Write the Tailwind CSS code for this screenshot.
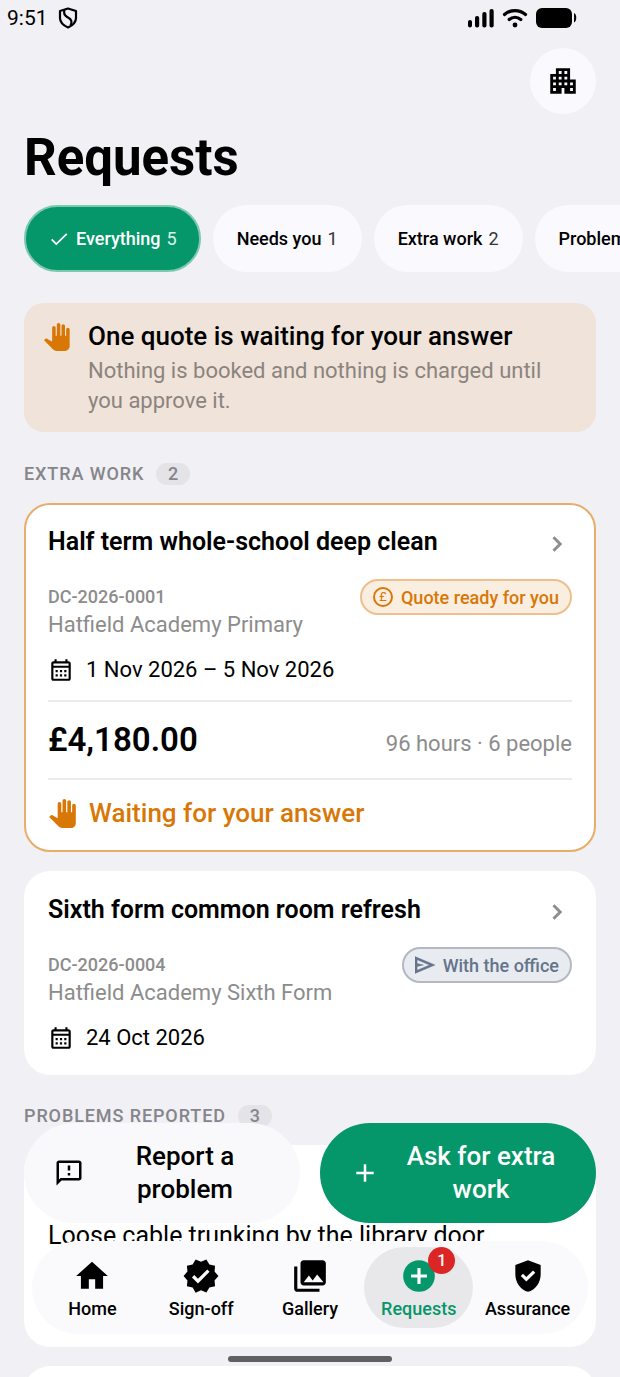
<!DOCTYPE html>
<html lang="en">
<head>
  <meta charset="UTF-8">
  <meta name="viewport" content="width=device-width, initial-scale=1">
  <title>Requests</title>
  <script src="https://cdn.jsdelivr.net/npm/@tailwindcss/browser@4"></script>
</head>
<body class="h-dvh overflow-hidden bg-[#f0f0f5] text-black font-['Roboto',sans-serif]">

  <div class="relative h-full flex flex-col">

    <!-- Status bar -->
    <div class="flex items-center h-9 pl-[7px] pr-[43px] shrink-0">
      <span class="text-[21px] leading-9">9:51</span>
      <svg class="ml-[10px] w-[20px] h-[22px]" viewBox="0 0 20 22" fill="none" stroke="currentColor" stroke-width="2.2" stroke-linejoin="round">
        <path d="M10 1.5 2 4v7c0 4.5 3.5 7.500 8 9.500 4.500-2 8-5 8-9.500V4z"></path>
        <path d="M6.500 2.800c-1.500 4 .5 6 3.500 7.700 3.500 1.900 4.500 4.500 2.500 8"></path>
      </svg>
      <svg class="ml-auto w-[26px] h-5" viewBox="0 0 26 20" fill="currentColor">
        <rect x="0" y="12" width="4" height="7.500" rx="2"></rect>
        <rect x="7" y="8" width="4.200" height="11.500" rx="2"></rect>
        <rect x="14.300" y="4" width="4.200" height="15.500" rx="2"></rect>
        <rect x="21.500" y="1" width="4.200" height="18.500" rx="2"></rect>
      </svg>
      <svg class="ml-2 w-[26px] h-5" viewBox="0 0 26 20" fill="none" stroke="currentColor" stroke-width="3.200" stroke-linecap="round">
        <path d="M2.500 6.500c6-5.300 15-5.300 21 0"></path>
        <path d="M7.200 11.500c3.400-2.900 8.200-2.900 11.600 0"></path>
        <circle cx="13" cy="17" r="2.400" fill="currentColor" stroke="none"></circle>
      </svg>
      <svg class="ml-2 w-[41px] h-5" viewBox="0 0 41 20" fill="currentColor">
        <rect x="0" y="0" width="36" height="20" rx="6"></rect>
        <path d="M38 5c3 1 3 8.500 0 9.500z"></path>
      </svg>
    </div>

    <main class="flex-1 min-h-0 overflow-y-auto [scrollbar-width:none]">
      <!-- Header -->
      <header class="px-6 pt-3">
        <div class="flex justify-end">
          <button type="button" aria-label="Switch site" class="size-[66px] rounded-full bg-[#f9f9fe] flex items-center justify-center">
            <svg class="size-[34px]" viewBox="0 0 24 24" fill="currentColor"><path d="M17 11V3H7v4H3v14h8v-4h2v4h8V11h-4zM7 19H5v-2h2v2zm0-4H5v-2h2v2zm0-4H5V9h2v2zm4 4H9v-2h2v2zm0-4H9V9h2v2zm0-4H9V5h2v2zm4 8h-2v-2h2v2zm0-4h-2V9h2v2zm0-4h-2V5h2v2zm4 12h-2v-2h2v2zm0-4h-2v-2h2v2z"></path></svg>
          </button>
        </div>
        <h1 class="mt-[13px] text-[51px] leading-[62px] font-bold">Requests</h1>
      </header>

      <!-- Filter chips -->
      <div class="mt-4 pl-6 flex gap-3 overflow-hidden text-[18px] leading-6 font-medium whitespace-nowrap">
        <button type="button" aria-pressed="true" class="h-[67px] shrink-0 px-[22px] rounded-full border-2 border-[#7cc9ae] bg-[#059669] text-white flex items-center gap-[6px]">
          <svg class="size-[22px]" viewBox="0 0 24 24" fill="none" stroke="currentColor" stroke-width="2"><path d="M4 12.500 9 17.500 20.500 6.500"></path></svg>
          <span>Everything</span>
          <span class="font-normal text-white/85">5</span>
        </button>
        <button type="button" class="h-[67px] shrink-0 px-6 rounded-full bg-[#f9f9fe] flex items-center gap-[6px]">
          Needs you <span class="font-normal text-[#333]">1</span>
        </button>
        <button type="button" class="h-[67px] shrink-0 px-6 rounded-full bg-[#f9f9fe] flex items-center gap-[6px]">
          Extra work <span class="font-normal text-[#333]">2</span>
        </button>
        <button type="button" class="h-[67px] shrink-0 px-6 rounded-full bg-[#f9f9fe] flex items-center gap-[6px]">
          Problems <span class="font-normal text-[#333]">3</span>
        </button>
      </div>

      <!-- Banner -->
      <div class="mx-6 mt-[31px] px-5 py-4 rounded-[20px] bg-[#f0e3d9] flex items-start gap-4">
        <svg class="mt-1 size-7 shrink-0 text-[#d97706]" viewBox="1 0 24 24" fill="currentColor"><path d="M23 5.500V20c0 2.200-1.800 4-4 4h-7.300c-1.080 0-2.100-.43-2.850-1.190L1 14.830s1.260-1.230 1.300-1.250c.22-.19.49-.29.79-.29.22 0 .42.06.6.16.04.010 4.310 2.460 4.310 2.460V4c0-.83.67-1.500 1.500-1.500S11 3.170 11 4v7h1V1.500c0-.83.67-1.500 1.500-1.500S15 .67 15 1.500V11h1V2.500c0-.83.67-1.500 1.500-1.500s1.500.67 1.500 1.500V11h1V5.500c0-.83.67-1.500 1.500-1.500s1.500.67 1.500 1.500z"></path></svg>
        <div>
          <h2 class="text-[26px] leading-[34px] font-medium">One quote is waiting for your answer</h2>
          <p class="mt-[3px] text-[22px] leading-[30px] text-[#8b837e]">Nothing is booked and nothing is charged until you approve it.</p>
        </div>
      </div>

      <!-- Extra work -->
      <section class="px-6 mt-[31px]">
        <div class="flex items-center gap-3 mb-[18px] text-[18px] leading-[22px] text-[#85858a] font-medium">
          <h2 class="tracking-wider">EXTRA WORK</h2>
          <span class="w-[34px] text-center rounded-full bg-[#e3e3e8]">2</span>
        </div>

        <div class="flex flex-col gap-[19px]">
          <a href="#" class="block p-[22px] rounded-[26px] border-2 border-[#e8ad69] bg-white">
            <div class="flex items-start justify-between h-[34px]">
              <h3 class="text-[25px] leading-[30px] font-semibold">Half term whole-school deep clean</h3>
              <svg class="mt-[2px] size-[30px] text-[#8c8c8c]" viewBox="0 0 24 24" fill="currentColor" stroke="currentColor" stroke-width=".4"><path d="M8.590 16.590L13.170 12 8.590 7.410 10 6l6 6-6 6z"></path></svg>
            </div>
            <div class="mt-[18px] flex items-start justify-between">
              <div class="pt-[5px] text-[#8c8c8c]">
                <p class="text-[18px] leading-[26px] font-medium">DC-2026-0001</p>
                <p class="text-[22px] leading-[30px]">Hatfield Academy Primary</p>
              </div>
              <span class="h-9 px-[11px] rounded-full border-2 border-[#eebf8c] bg-[#faeee1] text-[#d97706] text-[18px] font-medium flex items-center gap-2">
                <span class="size-5 rounded-full border-2 border-current text-[13px] font-normal leading-4 text-center">£</span>
                Quote ready for you
              </span>
            </div>
            <div class="mt-[15px] flex items-center gap-3 text-[22px] leading-[30px]">
              <svg class="size-[26px]" viewBox="0 0 24 24" fill="currentColor"><path d="M19 4h-1V2h-2v2H8V2H6v2H5c-1.110 0-1.990.9-1.990 2L3 20c0 1.100.89 2 2 2h14c1.100 0 2-.9 2-2V6c0-1.100-.9-2-2-2zm0 16H5V10h14v10zm0-12H5V6h14v2zM9 14H7v-2h2v2zm4 0h-2v-2h2v2zm4 0h-2v-2h2v2zm-8 4H7v-2h2v2zm4 0h-2v-2h2v2zm4 0h-2v-2h2v2z"></path></svg>
              1 Nov 2026 – 5 Nov 2026
            </div>
            <div class="mt-[15px] py-[18px] border-y-2 border-[#ebebeb] flex items-center justify-between">
              <span class="text-[33px] leading-10 font-semibold">£4,180.00</span>
              <span class="pt-2 text-[22px] leading-7 text-[#8c8c8c]">96 hours · 6 people</span>
            </div>
            <div class="mt-[18px] flex items-center gap-3 text-[26px] leading-[30px] font-medium text-[#d97706]">
              <svg class="size-[29px]" viewBox="0 0 24 24" fill="currentColor"><path d="M23 5.500V20c0 2.200-1.800 4-4 4h-7.300c-1.080 0-2.100-.43-2.850-1.190L1 14.830s1.260-1.230 1.300-1.250c.22-.19.49-.29.79-.29.22 0 .42.06.6.16.04.010 4.310 2.460 4.310 2.460V4c0-.83.67-1.500 1.500-1.500S11 3.170 11 4v7h1V1.500c0-.83.67-1.500 1.500-1.500S15 .67 15 1.500V11h1V2.500c0-.83.67-1.500 1.500-1.500s1.500.67 1.500 1.500V11h1V5.500c0-.83.67-1.500 1.500-1.500s1.500.67 1.500 1.500z"></path></svg>
              Waiting for your answer
            </div>
          </a>

          <a href="#" class="block px-6 pt-6 pb-[22px] rounded-[26px] bg-white">
            <div class="flex items-start justify-between h-[34px]">
              <h3 class="text-[25px] leading-[30px] font-semibold">Sixth form common room refresh</h3>
              <svg class="mt-[2px] size-[30px] text-[#8c8c8c]" viewBox="0 0 24 24" fill="currentColor" stroke="currentColor" stroke-width=".4"><path d="M8.590 16.590L13.170 12 8.590 7.410 10 6l6 6-6 6z"></path></svg>
            </div>
            <div class="mt-[18px] flex items-start justify-between">
              <div class="pt-[5px] text-[#8c8c8c]">
                <p class="text-[18px] leading-[26px] font-medium">DC-2026-0004</p>
                <p class="text-[22px] leading-[30px]">Hatfield Academy Sixth Form</p>
              </div>
              <span class="h-9 px-[11px] rounded-full border-2 border-[#b3b8c2] bg-[#e8ebef] text-[#64748b] text-[18px] font-medium flex items-center gap-2">
                <svg class="size-5" viewBox="3 2.5 19 19" fill="currentColor" stroke="currentColor" stroke-width=".4"><path d="M3 20V4l19 8-19 8Zm2-3 11.850-5L5 7v3.500l6 1.500-6 1.500V17Z"></path></svg>
                With the office
              </span>
            </div>
            <div class="mt-[15px] flex items-center gap-3 text-[22px] leading-[30px]">
              <svg class="size-[26px]" viewBox="0 0 24 24" fill="currentColor"><path d="M19 4h-1V2h-2v2H8V2H6v2H5c-1.110 0-1.990.9-1.990 2L3 20c0 1.100.89 2 2 2h14c1.100 0 2-.9 2-2V6c0-1.100-.9-2-2-2zm0 16H5V10h14v10zm0-12H5V6h14v2zM9 14H7v-2h2v2zm4 0h-2v-2h2v2zm4 0h-2v-2h2v2zm-8 4H7v-2h2v2zm4 0h-2v-2h2v2zm4 0h-2v-2h2v2z"></path></svg>
              24 Oct 2026
            </div>
          </a>
        </div>
      </section>

      <!-- Problems reported -->
      <section class="px-6 mt-[30px]">
        <div class="flex items-center gap-3 mb-[18px] text-[18px] leading-[22px] text-[#85858a] font-medium">
          <h2 class="tracking-wider">PROBLEMS REPORTED</h2>
          <span class="w-[34px] text-center rounded-full bg-[#e3e3e8]">3</span>
        </div>
        <div class="flex flex-col gap-[19px]">
          <a href="#" class="block px-6 pt-[76px] pb-24 rounded-[26px] bg-white text-[25px] leading-[30px]">Loose cable trunking by the library door</a>
          <div class="h-40 rounded-[26px] bg-white"></div>
        </div>
      </section>
    </main>

    <!-- Floating actions and tab bar -->
    <div class="absolute inset-x-0 bottom-0 pb-[15px] flex flex-col">
      <div class="px-6 flex gap-5 text-[26px] leading-[33px] font-medium">
        <button type="button" class="flex-1 h-[100px] px-[30px] rounded-full bg-[#f9f9fb]/95 flex items-center gap-4">
          <svg class="size-[30px] shrink-0" viewBox="0 0 24 24" fill="currentColor"><path d="M20 2H4c-1.100 0-1.990.9-1.990 2L2 22l4-4h14c1.100 0 2-.9 2-2V4c0-1.100-.9-2-2-2zm0 14H5.170l-.59.59-.58.58V4h16v12zm-9-4h2v2h-2zm0-6h2v4h-2z"></path></svg>
          <span class="flex-1">Report a problem</span>
        </button>
        <button type="button" class="flex-1 h-[100px] px-[30px] rounded-full bg-[#059669] text-white flex items-center gap-4">
          <svg class="size-[30px] shrink-0" viewBox="0 0 24 24" fill="currentColor"><path d="M19 13h-6v6h-2v-6H5v-2h6V5h2v6h6v2z"></path></svg>
          <span class="flex-1">Ask for extra work</span>
        </button>
      </div>

      <nav class="mx-8 mt-[18px] p-[6px] rounded-full bg-[#fafafc] flex text-[18px] leading-[22px] font-medium">
        <a href="#" class="flex-1 h-[81px] pt-[10px] flex flex-col items-center gap-[3px]">
          <svg class="size-[38px]" viewBox="0 0 24 24" fill="currentColor"><path d="M10 20v-6h4v6h5v-8h3L12 3 2 12h3v8z"></path></svg>
          <span>Home</span>
        </a>
        <a href="#" class="flex-1 h-[81px] pt-[10px] flex flex-col items-center gap-[3px]">
          <svg class="size-[38px]" viewBox="0 0 24 24" fill="currentColor"><path d="M23 12l-2.440-2.790.34-3.690-3.610-.82-1.890-3.200L12 2.960 8.600 1.500 6.710 4.690 3.100 5.500l.34 3.700L1 12l2.440 2.790-.34 3.700 3.610.82L8.600 22.500l3.400-1.470 3.400 1.460 1.890-3.190 3.610-.82-.34-3.690L23 12zm-12.910 4.720l-3.800-3.810 1.480-1.480 2.320 2.330 5.850-5.870 1.480 1.480-7.330 7.350z"></path></svg>
          <span>Sign-off</span>
        </a>
        <a href="#" class="flex-1 h-[81px] pt-[10px] flex flex-col items-center gap-[3px]">
          <svg class="size-[38px]" viewBox="0 0 24 24" fill="currentColor"><path d="M22 16V4c0-1.100-.9-2-2-2H8c-1.100 0-2 .9-2 2v12c0 1.100.9 2 2 2h12c1.100 0 2-.9 2-2zM8 16l3.300-4.300 2.400 3.100 2.800-3.800L20.500 16zM2 6v14c0 1.100.9 2 2 2h14v-2H4V6H2z"></path></svg>
          <span>Gallery</span>
        </a>
        <a href="#" aria-current="page" class="relative flex-1 h-[81px] pt-[10px] rounded-full bg-[#e8e8eb] text-[#059669] flex flex-col items-center gap-[3px]">
          <svg class="size-[38px]" viewBox="0 0 24 24" fill="currentColor"><circle cx="12" cy="12" r="10"></circle><path fill="#fff" d="M11 7h2v4h4v2h-4v4h-2v-4H7v-2h4z"></path></svg>
          <span>Requests</span>
          <span class="absolute left-[64px] top-0 size-[27px] rounded-full bg-[#dc2626] text-white text-[16px] leading-[27px] text-center">1</span>
        </a>
        <a href="#" class="flex-1 h-[81px] pt-[10px] flex flex-col items-center gap-[3px]">
          <svg class="size-[38px]" viewBox="0 0 24 24" fill="currentColor"><path d="m10.950 15.550 5.650-5.650-1.425-1.425L10.950 12.700l-2.100-2.100-1.425 1.425ZM12 22q-3.475-.875-5.738-3.988Q4 14.900 4 11.100V5l8-3 8 3v6.100q0 3.800-2.262 6.912Q15.475 21.125 12 22Z"></path></svg>
          <span>Assurance</span>
        </a>
      </nav>

      <div class="mt-[22px] mx-auto w-[164px] h-[6px] rounded-full bg-[#606062]"></div>
    </div>
  </div>

</body>
</html>
